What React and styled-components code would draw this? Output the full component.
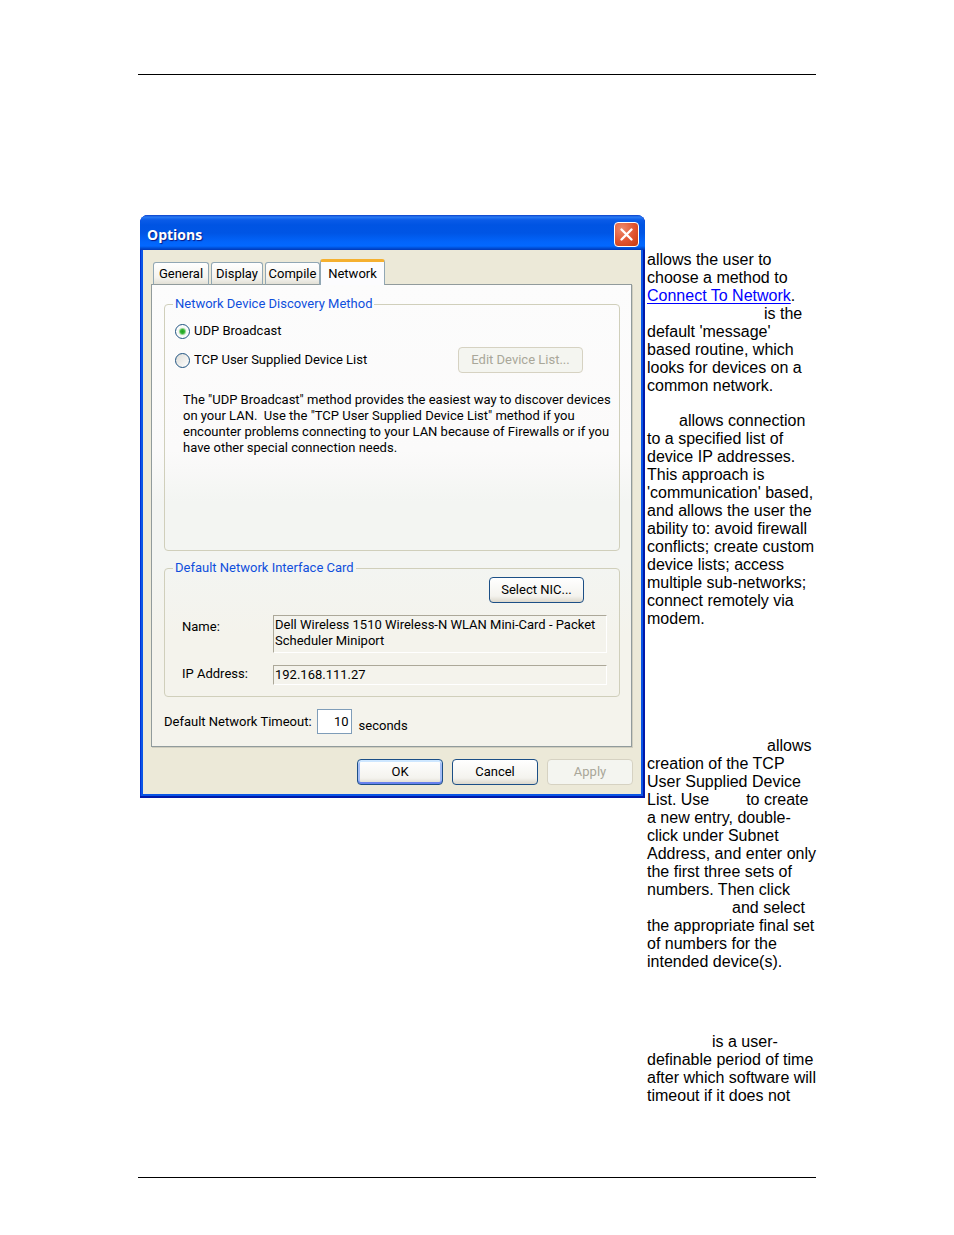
import { useState } from 'react'
import styled, { createGlobalStyle } from 'styled-components'

const GlobalStyle = createGlobalStyle`
    *, *::before, *::after {
        box-sizing: border-box;
    }

    body {
        margin: 0;
        background: #fff;
        color: #000;
        font-family: 'Liberation Sans', Arial, sans-serif;
    }
`

const uiFont = `'Roboto', 'Liberation Sans', sans-serif`

const Page = styled.main`
    padding: 74px 138px 57px;
`

const Sheet = styled.div`
    display: grid;
    grid-template-columns: minmax(0, 1fr) 169px;
    align-items: start;
    border-top: 1px solid #000;
    border-bottom: 1px solid #000;
    padding: 140px 0 72px;
`

const Dialog = styled.section`
    margin: 0 2px;
    padding: 0 4px 4px 3px;
    border-radius: 8px 8px 0 0;
    background: #0a55e6;
    box-shadow: inset -2px -2px 0 #0019a8, inset 1px 0 0 #0030d6;
    font-family: ${uiFont};
    font-size: 13px;
    line-height: 16px;
    overflow: hidden;
`

const TitleBar = styled.header`
    display: flex;
    align-items: center;
    justify-content: space-between;
    height: 35px;
    margin: 0 -4px 0 -3px;
    padding: 4px 6px 0 7px;
    background: linear-gradient(#0a3fc8 0, #2a7bf4 2px, #0a5be8 5px, #0054e3 10px, #0055e5 18px, #0265fb 27px, #0268ff 31px, #0050d8 33px, #0038b8 35px);
`

const Title = styled.h1`
    margin: 0;
    color: #fff;
    font-family: 'Open Sans', 'Noto Sans', sans-serif;
    font-size: 14px;
    font-weight: 700;
    line-height: 20px;
    text-shadow: 1px 1px 1px #0a1883;
`

const CloseButton = styled.button`
    display: grid;
    place-items: center;
    width: 25px;
    height: 25px;
    padding: 0;
    border: 1px solid #fff;
    border-radius: 4px;
    background: radial-gradient(circle at 30% 25%, #ee8a6c, #e0532f 55%, #c73a0c);
`

const Client = styled.div`
    padding: 9px 8px;
    background: #ece9d8;
`

const TabList = styled.div`
    display: flex;
    align-items: flex-end;
    gap: 2px;
    padding-left: 2px;
    margin-bottom: -1px;
`

const Tab = styled.button`
    position: relative;
    width: ${({ $width }) => $width}px;
    height: ${({ $selected }) => ($selected ? 26 : 23)}px;
    margin-left: ${({ $selected }) => ($selected ? -2 : 0)}px;
    padding: 0;
    border: 1px solid #91a7b4;
    border-top: ${({ $selected }) => ($selected ? '3px solid #f5b030' : '1px solid #91a7b4')};
    border-bottom: ${({ $selected }) => ($selected ? 0 : '1px solid #919b9c')};
    border-radius: 3px 3px 0 0;
    background: ${({ $selected }) => ($selected ? '#fcfcfe' : 'linear-gradient(#fff, #f4f3ee 70%, #e2e0d6)')};
    color: #000;
    font: inherit;
`

const Panel = styled.div`
    margin-right: 1px;
    padding: 10px 11px 12px 12px;
    border: 1px solid #919b9c;
    box-shadow: 1px 1px 0 #d0cebf;
    background: linear-gradient(#fcfcfc 0, #fbfafa 36%, #f3f5f2 47%, #f3f5f2 60%, #f4f3ec 76%, #f4f3ec 100%);
`

const Group = styled.fieldset`
    min-width: 0;
    margin: 0 0 8px;
    padding: 0 0 ${({ $bottom }) => $bottom}px;
    border: 1px solid #d0cfbb;
    border-radius: 4px;
`

const Legend = styled.legend`
    margin-left: 8px;
    padding: 0 2px;
    color: #0f4fdc;
    line-height: 18px;
`

const Choices = styled.div`
    display: grid;
    gap: 7px;
    padding: 9px 36px 0 10px;
`

const ChoiceRow = styled.div`
    display: flex;
    align-items: center;
    justify-content: space-between;
`

const RadioLabel = styled.label`
    display: flex;
    align-items: center;
    gap: 4px;
    line-height: 18px;
`

const Radio = styled.input`
    appearance: none;
    width: 15px;
    height: 15px;
    margin: 0;
    border: 1px solid #1f5381;
    border-radius: 50%;
    background: linear-gradient(135deg, #dcdcd7, #fff);

    &:checked {
        background: radial-gradient(circle, #21a121 0, #35b535 2px, #f3f5f1 4px, #fff 6px);
    }
`

const Note = styled.p`
    margin: 19px 0 0 18px;
    white-space: pre-line;
`

const Button = styled.button`
    width: ${({ $width = 86 }) => $width}px;
    height: 26px;
    padding: 0;
    border: 1px solid #1c4f86;
    border-radius: 4px;
    background: linear-gradient(#fff, #f4f3ee 75%, #dcd8cc);
    box-shadow: ${({ $primary }) => ($primary ? 'inset 0 2px 0 #cee7ff, inset 0 -2px 0 #6982ee, inset 2px 0 0 #a4bdf5, inset -2px 0 0 #a4bdf5' : 'none')};
    color: #000;
    font: inherit;

    &:disabled {
        border-color: #d6d2c2;
        background: #f4f5f0;
        color: #a9a799;
    }
`

const ButtonLine = styled.div`
    display: flex;
    justify-content: flex-end;
    padding-right: 35px;
`

const Details = styled.div`
    display: grid;
    grid-template-columns: 91px minmax(0, 1fr);
    align-items: start;
    gap: 12px 0;
    padding: 12px 12px 0 17px;
`

const FieldLabel = styled.label`
    padding-top: ${({ $top = 0 }) => $top}px;
`

const ReadOnly = styled.textarea`
    display: block;
    width: 100%;
    height: ${({ rows }) => (rows === 2 ? 38 : 20)}px;
    padding: 1px 1px 0;
    border: 1px solid;
    border-color: #aca899 #fff #fff #aca899;
    background: transparent;
    color: #000;
    font: inherit;
    resize: none;
    overflow: hidden;
`

const TimeoutRow = styled.div`
    display: flex;
    align-items: center;
    margin-top: 12px;
`

const TimeoutInput = styled.input`
    width: 35px;
    height: 25px;
    margin: 0 7px 0 5px;
    padding: 0 2px;
    border: 1px solid #7f9db9;
    background: #fff;
    font: inherit;
    text-align: right;
`

const Unit = styled.span`
    padding-top: 8px;
`

const Actions = styled.footer`
    display: flex;
    justify-content: flex-end;
    gap: 9px;
    margin-top: 12px;
`

const Notes = styled.aside`
    padding-top: 36px;
    font-size: 16px;
    line-height: 18px;
    white-space: nowrap;
`

const Paragraph = styled.p`
    margin: ${({ $space = 0 }) => $space}px 0 0;
`

const Line = styled.span`
    display: block;
    padding-left: ${({ $indent = 0 }) => $indent}px;
`

const Blank = styled.span`
    display: inline-block;
    width: 28px;
`

const NoteLink = styled.a`
    color: #00f;
    text-decoration: underline;
    text-underline-offset: 2px;
`

const tabs = [
    { name: 'General', width: 56 },
    { name: 'Display', width: 52 },
    { name: 'Compile', width: 55 },
    { name: 'Network', width: 65 },
]

const discoveryText = `The "UDP Broadcast" method provides the easiest way to discover devices
on your LAN.\u00a0 Use the "TCP User Supplied Device List" method if you
encounter problems connecting to your LAN because of Firewalls or if you
have other special connection needs.`

function OptionsDialog() {
    const [method, setMethod] = useState('udp')
    const [timeout, setTimeoutValue] = useState('10')

    return (
        <Dialog role='dialog' aria-labelledby='options-title'>
            <TitleBar>
                <Title id='options-title'>Options</Title>
                <CloseButton type='button' aria-label='Close'>
                    <svg width='15' height='15' viewBox='0 0 15 15' fill='none' stroke='#fff' strokeWidth='2.4' strokeLinecap='round'>
                        <path d='M2.5 2.5 12.5 12.5M12.5 2.5 2.5 12.5' />
                    </svg>
                </CloseButton>
            </TitleBar>
            <Client>
                <TabList role='tablist'>
                    {tabs.map(({ name, width }) => (
                        <Tab key={name} type='button' role='tab' aria-selected={name === 'Network'} $selected={name === 'Network'} $width={width}>
                            {name}
                        </Tab>
                    ))}
                </TabList>
                <Panel role='tabpanel'>
                    <Group $bottom={94}>
                        <Legend>Network Device Discovery Method</Legend>
                        <Choices>
                            <ChoiceRow>
                                <RadioLabel>
                                    <Radio type='radio' name='method' checked={method === 'udp'} onChange={() => setMethod('udp')} />
                                    UDP Broadcast
                                </RadioLabel>
                            </ChoiceRow>
                            <ChoiceRow>
                                <RadioLabel>
                                    <Radio type='radio' name='method' checked={method === 'tcp'} onChange={() => setMethod('tcp')} />
                                    TCP User Supplied Device List
                                </RadioLabel>
                                <Button type='button' $width={125} disabled={method !== 'tcp'}>Edit Device List...</Button>
                            </ChoiceRow>
                        </Choices>
                        <Note>{discoveryText}</Note>
                    </Group>
                    <Group $bottom={11}>
                        <Legend>Default Network Interface Card</Legend>
                        <ButtonLine>
                            <Button type='button' $width={95}>Select NIC...</Button>
                        </ButtonLine>
                        <Details>
                            <FieldLabel htmlFor='nic-name' $top={4}>Name:</FieldLabel>
                            <ReadOnly id='nic-name' rows={2} readOnly value='Dell Wireless 1510 Wireless-N WLAN Mini-Card - Packet Scheduler Miniport' />
                            <FieldLabel htmlFor='nic-ip' $top={1}>IP Address:</FieldLabel>
                            <ReadOnly id='nic-ip' rows={1} readOnly value='192.168.111.27' />
                        </Details>
                    </Group>
                    <TimeoutRow>
                        <label htmlFor='timeout'>Default Network Timeout:</label>
                        <TimeoutInput id='timeout' value={timeout} onChange={(e) => setTimeoutValue(e.target.value)} />
                        <Unit>seconds</Unit>
                    </TimeoutRow>
                </Panel>
                <Actions>
                    <Button type='button' $primary>OK</Button>
                    <Button type='button'>Cancel</Button>
                    <Button type='button' disabled>Apply</Button>
                </Actions>
            </Client>
        </Dialog>
    )
}

export default function App() {
    return (
        <>
            <GlobalStyle />
            <Page>
                <Sheet>
                    <OptionsDialog />
                    <Notes>
                        <Paragraph>
                            <Line>allows the user to</Line>
                            <Line>choose a method to</Line>
                            <Line><NoteLink href='#connect'>Connect To Network</NoteLink>.</Line>
                            <Line $indent={117}>is the</Line>
                            <Line>default 'message'</Line>
                            <Line>based routine, which</Line>
                            <Line>looks for devices on a</Line>
                            <Line>common network.</Line>
                        </Paragraph>
                        <Paragraph $space={17}>
                            <Line $indent={32}>allows connection</Line>
                            <Line>to a specified list of</Line>
                            <Line>device IP addresses.</Line>
                            <Line>This approach is</Line>
                            <Line>'communication' based,</Line>
                            <Line>and allows the user the</Line>
                            <Line>ability to: avoid firewall</Line>
                            <Line>conflicts; create custom</Line>
                            <Line>device lists; access</Line>
                            <Line>multiple sub-networks;</Line>
                            <Line>connect remotely via</Line>
                            <Line>modem.</Line>
                        </Paragraph>
                        <Paragraph $space={109}>
                            <Line $indent={120}>allows</Line>
                            <Line>creation of the TCP</Line>
                            <Line>User Supplied Device</Line>
                            <Line>List. Use <Blank /> to create</Line>
                            <Line>a new entry, double-</Line>
                            <Line>click under Subnet</Line>
                            <Line>Address, and enter only</Line>
                            <Line>the first three sets of</Line>
                            <Line>numbers. Then click</Line>
                            <Line $indent={85}>and select</Line>
                            <Line>the appropriate final set</Line>
                            <Line>of numbers for the</Line>
                            <Line>intended device(s).</Line>
                        </Paragraph>
                        <Paragraph $space={62}>
                            <Line $indent={65}>is a user-</Line>
                            <Line>definable period of time</Line>
                            <Line>after which software will</Line>
                            <Line>timeout if it does not</Line>
                        </Paragraph>
                    </Notes>
                </Sheet>
            </Page>
        </>
    )
}
